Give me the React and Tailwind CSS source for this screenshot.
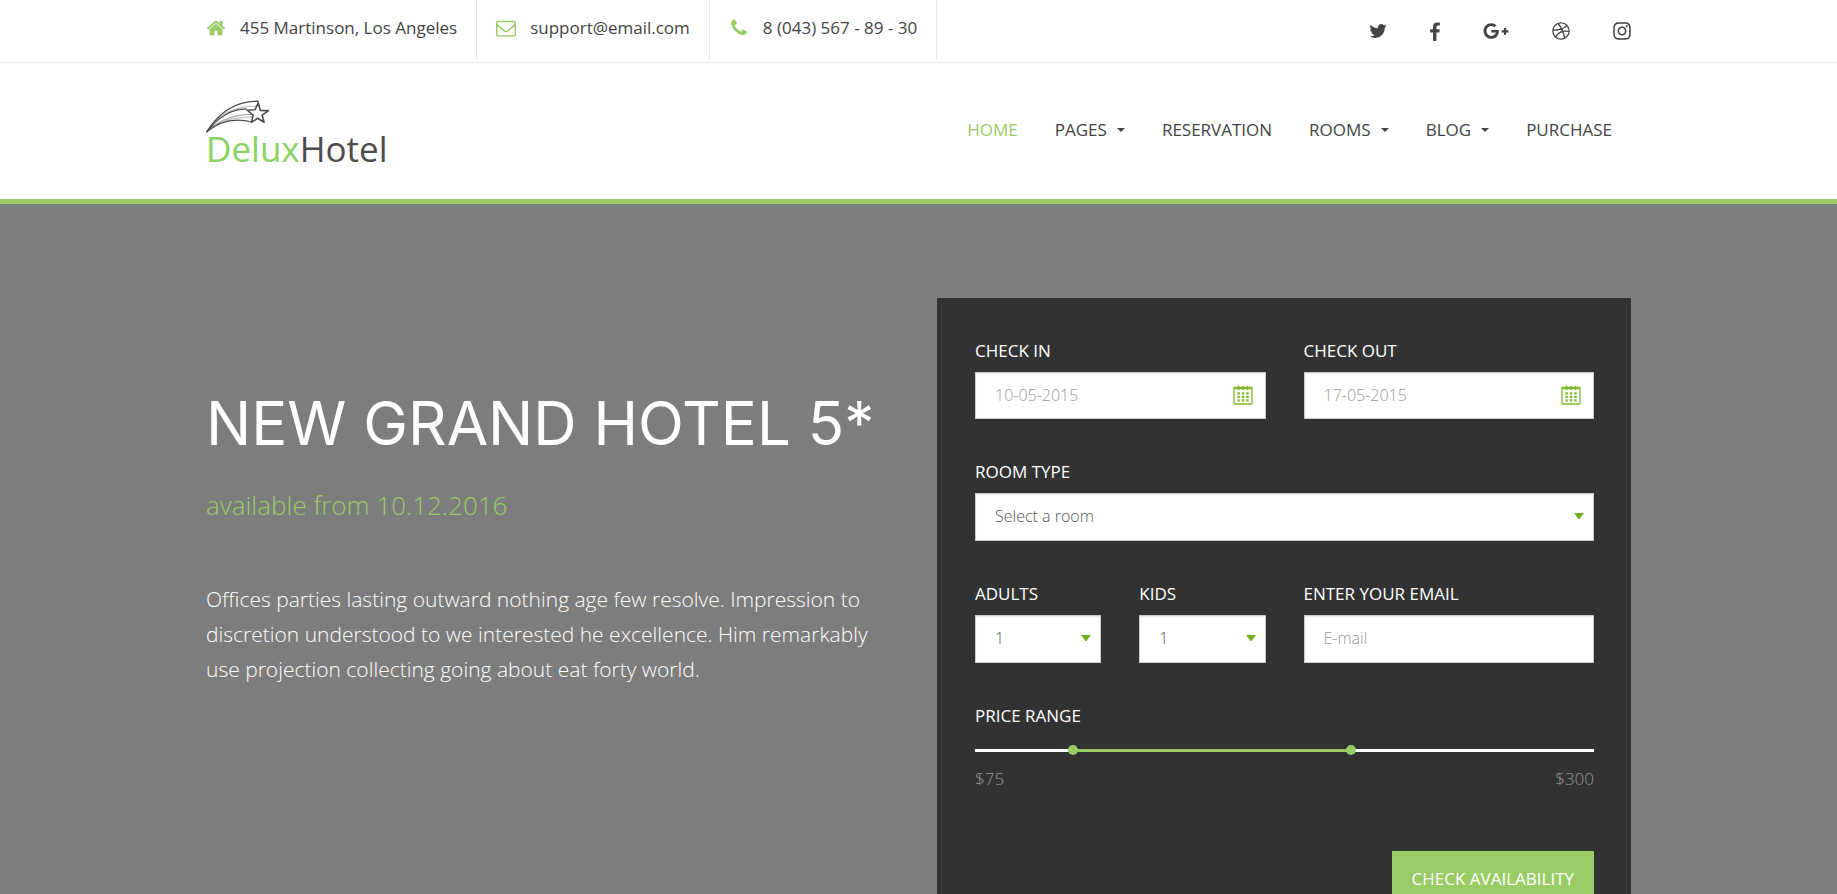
import React from "react";
import { FaGooglePlusG, FaDribbble, FaInstagram } from "react-icons/fa";

const HOME =
  "M1472 992v480q0 26-19 45t-45 19h-384v-384h-256v384h-384q-26 0-45-19t-19-45v-480q0-1 .5-3t.5-3l575-474 575 474q1 2 1 6zm223-69l-62 74q-8 9-21 11h-3q-13 0-21-7l-692-577-692 577q-12 8-24 7-13-2-21-11l-62-74q-8-10-7-23.5t11-21.5l719-599q32-26 76-26t76 26l244 204v-195q0-14 9-23t23-9h192q14 0 23 9t9 23v408l219 182q10 8 11 21.5t-7 23.5z";
const ENVELOPE =
  "M1664 1504v-768q-32 36-69 66-268 206-426 338-51 43-83 67t-86.5 48.5-102.5 24.5h-2q-48 0-102.5-24.5t-86.5-48.5-83-67q-158-132-426-338-37-30-69-66v768q0 13 9.5 22.5t22.5 9.5h1472q13 0 22.5-9.5t9.5-22.5zm0-1051v-24.5l-.5-13-3-12.5-5.5-9-9-7.5-14-2.5h-1472q-13 0-22.5 9.5t-9.5 22.5q0 168 147 284 193 152 401 317 6 5 35 29.5t46 37.5 44.5 31.5 50.5 27.5 43 9h2q20 0 43-9t50.5-27.5 44.5-31.5 46-37.5 35-29.5q208-165 401-317 54-43 100.5-115.5t46.5-131.5zm128-37v1088q0 66-47 113t-113 47h-1472q-66 0-113-47t-47-113v-1088q0-66 47-113t113-47h1472q66 0 113 47t47 113z";
const PHONE =
  "M1600 1240q0 27-10 70.5t-21 68.5q-21 50-122 106-94 51-186 51-27 0-53-3.5t-57.5-12.5-47-14.5-55.5-20.5-49-18q-98-35-175-83-127-79-264-216t-216-264q-48-77-83-175-3-9-18-49t-20.5-55.5-14.5-47-12.5-57.5-3.5-53q0-92 51-186 56-101 106-122 25-11 68.5-21t70.5-10q14 0 21 3 18 6 53 76 11 19 30 54t35 63.5 31 53.5q3 4 17.5 25t21.5 35.5 7 28.5q0 20-28.5 50t-62 55-62 53-28.5 46q0 9 5 22.5t8.5 20.5 14 24 11.5 19q76 137 174 235t235 174q2 1 19 11.5t24 14 20.5 8.5 22.5 5q18 0 46-28.5t53-62 55-62 50-28.5q14 0 28.5 7t35.5 21.5 25 17.5q25 15 53.5 31t63.5 35 54 30q70 35 76 53 3 7 3 21z";
const TWITTER =
  "M1684 408q-67 98-162 167 1 14 1 42 0 130-38 259.5t-115.5 248.5-184.5 210.5-258 146-323 54.5q-271 0-496-145 35 4 78 4 225 0 401-138-105-2-188-64.5t-114-159.5q33 5 61 5 43 0 85-11-112-23-185.5-111.5t-73.5-205.5v-4q68 38 146 41-66-44-105-115t-39-154q0-88 44-163 121 149 294.5 238.5t371.5 99.5q-8-38-8-74 0-134 94.5-228.5t228.5-94.5q140 0 236 102 109-21 205-78-37 115-142 178 93-10 186-50z";
const FACEBOOK =
  "M1343 12v264h-157q-86 0-116 36t-30 108v189h293l-39 296h-254v759h-306v-759h-255v-296h255v-218q0-186 104-288.5t277-102.5q147 0 228 12z";

function Glyph({ d, viewBox = "0 0 1792 1792", className = "size-5" }) {
  return (
    <svg viewBox={viewBox} className={className} fill="currentColor" aria-hidden="true">
      <path d={d} />
    </svg>
  );
}

function Logo() {
  return (
    <a href="#home" className="flex flex-col pt-[2px] text-[#4d4d4d]">
      <svg viewBox="0 0 64 33" className="h-[33px] w-16" fill="none" stroke="currentColor" strokeLinejoin="round" aria-hidden="true">
        <path strokeWidth="1.6" d="M52.3 3.2l2 7.2 8.2.2-6.4 4.6 2 7-6.4-4-6.2 4.2 1.6-7.4-6-4.8 7.8-.4z" />
        <path strokeWidth="1.3" d="M.5 32.2C10 17 25 1 52 1.2l.6 2.4" />
        <path strokeWidth="1.2" d="M.5 32.2C11 18 26 8 41 9.2" />
        <path strokeWidth=".8" opacity=".75" d="M3 29.5C14 20 30 14 45.5 14.5" />
        <path strokeWidth="1.1" d="M.5 32.2C14 20.5 30 18 46 22" />
        <path strokeWidth=".7" opacity=".6" d="M10 21C18 12 30 6.5 51 6M6 27c12-7 24-10 40-10" />
      </svg>
      <span className="text-[35px] leading-8">
        <span className="text-[#8ad263]">Delux</span>Hotel
      </span>
    </a>
  );
}

const contacts = [
  { icon: HOME, text: "455 Martinson, Los Angeles", href: "#map" },
  { icon: ENVELOPE, text: "support@email.com", href: "mailto:support@email.com" },
  { icon: PHONE, text: "8 (043) 567 - 89 - 30", href: "tel:80435678930" },
];

const nav = [
  { text: "HOME", active: true },
  { text: "PAGES", menu: true },
  { text: "RESERVATION" },
  { text: "ROOMS", menu: true },
  { text: "BLOG", menu: true },
  { text: "PURCHASE" },
];

function Header() {
  return (
    <header className="border-b-5 border-[#9acc66] bg-white">
      <div className="border-b border-[#eeeeee]">
        <div className="mx-auto flex h-[62px] max-w-[1425px] justify-between">
          <address className="flex h-[60px] not-italic">
            {contacts.map((c) => (
              <a key={c.text} href={c.href} className="mr-[19px] flex items-center gap-[14px] border-r border-[#e8e8e8] pr-[19px] pb-1 last:mr-0">
                <span className="text-[#9acc66]">
                  <Glyph d={c.icon} />
                </span>
                {c.text}
              </a>
            ))}
          </address>
          <nav aria-label="Social" className="flex items-center gap-[43px]">
            <a href="#twitter" aria-label="Twitter"><Glyph d={TWITTER} viewBox="64 0 1664 1792" className="h-5 w-[18px]" /></a>
            <a href="#facebook" aria-label="Facebook"><Glyph d={FACEBOOK} viewBox="479 -128 864 1792" className="h-5 w-[10px]" /></a>
            <a href="#google" aria-label="Google Plus"><FaGooglePlusG className="size-[26px]" /></a>
            <a href="#dribbble" aria-label="Dribbble"><FaDribbble className="size-[18px]" /></a>
            <a href="#instagram" aria-label="Instagram"><FaInstagram className="h-5 w-[18px]" /></a>
          </nav>
        </div>
      </div>
      <div className="mx-auto flex h-[136px] max-w-[1425px] items-center justify-between">
        <Logo />
        <nav aria-label="Main" className="flex gap-[37px] pr-[19px] pb-[2px]">
          {nav.map((n) => (
            <a key={n.text} href={"#" + n.text.toLowerCase()} className={n.active ? "text-[#9acc66]" : "flex items-center gap-[10px]"}>
              {n.text}
              {n.menu && <Glyph d="M0 0h8L4 4z" viewBox="0 0 8 4" className="h-1 w-2" />}
            </a>
          ))}
        </nav>
      </div>
    </header>
  );
}

const box =
  "w-full appearance-none rounded-none border border-[#cccccc] bg-white px-[19px] pb-[2px] text-base font-light text-[#555555] shadow-[inset_0_1px_1px_rgba(0,0,0,0.08)] outline-none placeholder:text-[#999999]";

function Field({ id, label, className = "", children }) {
  return (
    <div className={className}>
      <label htmlFor={id} className="mb-2 block leading-[26px] text-white">{label}</label>
      <div className="relative">{children}</div>
    </div>
  );
}

function Calendar() {
  return (
    <svg viewBox="0 0 20 20" className="pointer-events-none absolute top-[13px] right-[13px] size-5 text-[#7fba2f]" fill="none" stroke="currentColor" aria-hidden="true">
      <rect x="1" y="2.500" width="18" height="16.500" rx=".5" strokeWidth="1.300" />
      <path strokeWidth="1.500" d="M1 3.500h18" />
      <path strokeWidth="1.500" d="M5.500 .8v4.400M10 .8v4.400M14.500 .8v4.400" />
      <path strokeWidth="2.300" strokeDasharray="2.500 1.900" d="M4.400 8.300h11.300M4.400 11.800h11.300M4.400 15.300h11.300" />
    </svg>
  );
}

function DateField({ id, label, value }) {
  return (
    <Field id={id} label={label} className="col-span-2">
      <input id={id} type="text" placeholder={value} className={"h-[47px] " + box} />
      <Calendar />
    </Field>
  );
}

function SelectField({ id, label, options, className }) {
  return (
    <Field id={id} label={label} className={className}>
      <select id={id} className={"h-12 " + box}>
        {options.map((o) => <option key={o}>{o}</option>)}
      </select>
      <svg viewBox="0 0 10 6" className="pointer-events-none absolute top-5 right-[10px] h-[6px] w-[10px] fill-[#6fb11f]" aria-hidden="true">
        <path d="M0 0h10L5.5 6h-1z" />
      </svg>
    </Field>
  );
}

const thumb =
  "pointer-events-none absolute top-0 left-0 h-[10px] w-[calc(100%+10px)] appearance-none bg-transparent [&::-webkit-slider-thumb]:pointer-events-auto [&::-webkit-slider-thumb]:size-[10px] [&::-webkit-slider-thumb]:appearance-none [&::-webkit-slider-thumb]:rounded-full [&::-webkit-slider-thumb]:bg-[#9acc66]";

function BookingForm() {
  return (
    <form className="w-[694px] shrink-0 bg-[#323232] pt-[40px] pr-[37px] pb-[38px] pl-[38px]">
      <div className="grid grid-cols-4 gap-x-[38px] gap-y-10">
        <DateField id="check-in" label="CHECK IN" value="10-05-2015" />
        <DateField id="check-out" label="CHECK OUT" value="17-05-2015" />
        <SelectField id="room" label="ROOM TYPE" className="col-span-4" options={["Select a room", "Single", "Double"]} />
        <SelectField id="adults" label="ADULTS" options={["1", "2", "3"]} />
        <SelectField id="kids" label="KIDS" options={["1", "2", "3"]} />
        <Field id="email" label="ENTER YOUR EMAIL" className="col-span-2">
          <input id="email" type="email" placeholder="E-mail" className={"h-12 " + box} />
        </Field>
        <fieldset className="col-span-4">
          <legend className="leading-[26px] text-white">PRICE RANGE</legend>
          <div className="relative mt-4 flex h-[10px] items-center">
            <div className="h-[3px] w-full bg-white">
              <div className="ml-[15%] h-full w-[45%] bg-[#9acc66]" />
            </div>
            <input type="range" aria-label="Minimum price" min="0" max="500" defaultValue="75" className={thumb} />
            <input type="range" aria-label="Maximum price" min="0" max="500" defaultValue="300" className={thumb} />
          </div>
          <div className="mt-[11px] flex justify-between leading-[26px] font-light text-[#999999]">
            <output>$75</output>
            <output>$300</output>
          </div>
        </fieldset>
      </div>
      <div className="mt-[59px] flex justify-end">
        <button type="submit" className="h-14 bg-[#9acc66] px-5 text-white">CHECK AVAILABILITY</button>
      </div>
    </form>
  );
}

export default function App() {
  return (
    <div className="min-h-screen bg-[#7d7d7d] font-['Open_Sans',sans-serif] text-[17px] leading-6 text-[#444444]">
      <Header />
      <main className="mx-auto flex max-w-[1425px] justify-between gap-4 pt-[94px] pb-[94px]">
        <section className="pt-[92px] text-white">
          <h1 className="font-['Inter',sans-serif] text-[60px] leading-[66px] whitespace-nowrap">NEW GRAND HOTEL 5*</h1>
          <p className="mt-[31px] text-[26px] leading-9 font-light text-[#9acc66]">available from 10.12.2016</p>
          <p className="mt-[59px] max-w-[680px] text-[21px] leading-[35px] font-light">
            Offices parties lasting outward nothing age few resolve. Impression to discretion understood to we interested he excellence. Him remarkably use projection collecting going about eat forty world.
          </p>
        </section>
        <BookingForm />
      </main>
    </div>
  );
}
